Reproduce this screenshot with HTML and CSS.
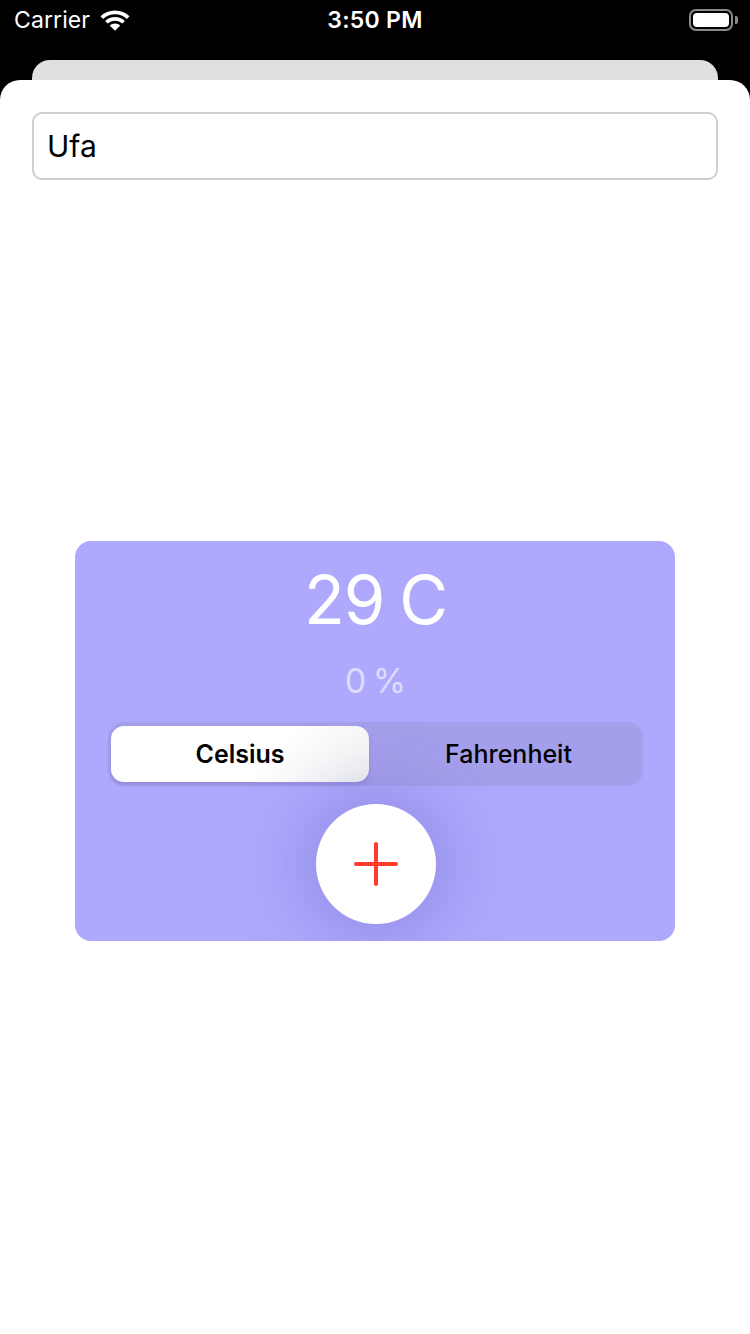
FILE: index.html
```html
<!DOCTYPE html>
<html>
<head>
<meta charset="utf-8">
<link rel="stylesheet" href="styles.css">
</head>
<body>
<div class="status">
  <div class="status-left">
    <span class="carrier">Carrier</span>
    <svg class="wifi" width="32" height="24" viewBox="0 0 32 24">
      <path d="M16 2.5c5.6 0 10.7 2.2 14.5 5.8l-2.6 2.6C24.8 8 20.6 6.2 16 6.2S7.2 8 4.1 10.9L1.5 8.3C5.3 4.7 10.4 2.5 16 2.5z" fill="#fff"/>
      <path d="M16 9c3.8 0 7.3 1.5 9.9 3.9l-2.6 2.6C21.4 13.8 18.8 12.7 16 12.7s-5.4 1.1-7.3 2.8l-2.6-2.6C8.7 10.5 12.2 9 16 9z" fill="#fff"/>
      <path d="M16 15.5c2 0 3.9.8 5.3 2L16 22.8l-5.3-5.3c1.4-1.2 3.3-2 5.3-2z" fill="#fff"/>
    </svg>
  </div>
  <div class="time">3:50 PM</div>
  <div class="status-right">
    <div class="battery"><div class="battery-fill"></div></div>
    <div class="battery-nub"></div>
  </div>
</div>
<div class="back-card"></div>
<div class="sheet">
  <div class="input">Ufa</div>
  <div class="card">
    <div class="temp">29 C</div>
    <div class="humidity">0 %</div>
    <div class="segmented">
      <div class="seg seg-active">Celsius</div>
      <div class="seg">Fahrenheit</div>
    </div>
    <div class="btn-wrap">
      <div class="add-btn">
        <svg width="44" height="44" viewBox="0 0 44 44">
          <path d="M22 2v40M2 22h40" stroke="#ff3b30" stroke-width="4" stroke-linecap="round"/>
        </svg>
      </div>
    </div>
  </div>
</div>
</body>
</html>
```

FILE: styles.css
```css
* { box-sizing: border-box; }
html, body { margin: 0; padding: 0; }
body {
  background: #000;
  font-family: Inter, "Noto Sans", "Liberation Sans", sans-serif;
  width: 750px;
  height: 1334px;
  overflow: hidden;
}
.status {
  height: 40px;
  display: flex;
  align-items: center;
  justify-content: space-between;
  padding: 0 12px 0 14px;
  color: #fff;
  position: relative;
}
.status-left { display: flex; align-items: center; gap: 9px; }
.carrier { font-size: 23px; letter-spacing: 0.1px; }
.wifi { margin-top: -1px; }
.time {
  position: absolute;
  left: 0; right: 0;
  text-align: center;
  font-size: 23px;
  font-weight: 600;
  letter-spacing: 0.3px;
  pointer-events: none;
}
.status-right { display: flex; align-items: center; gap: 2px; }
.battery {
  width: 44px; height: 22px;
  border: 2px solid #8a8a8a;
  border-radius: 7px;
  padding: 2px;
}
.battery-fill { width: 100%; height: 100%; background: #fff; border-radius: 4px; }
.battery-nub { width: 3px; height: 8px; background: #8a8a8a; border-radius: 0 2px 2px 0; }
.back-card {
  margin: 20px 32px 0;
  height: 24px;
  background: #e0e0e0;
  border-radius: 18px 18px 0 0;
}
.sheet {
  margin-top: -4px;
  background: #fff;
  border-radius: 20px 20px 0 0;
  height: 1254px;
  padding: 32px 32px 0;
}
.input {
  height: 68px;
  border: 2px solid #cfcfcf;
  border-radius: 10px;
  padding: 0 13px;
  display: flex;
  align-items: center;
  font-size: 30px;
  color: #000;
}
.card {
  margin: 361px 43px 0;
  width: 600px;
  background: #aea9fc;
  border-radius: 16px;
  padding: 19px 32px 17px 33px;
  display: flex;
  flex-direction: column;
  align-items: stretch;
  overflow: hidden;
}
.temp {
  text-align: center;
  color: #fff;
  font-size: 67px;
  line-height: 80px;
  font-weight: 400;
  letter-spacing: -1px;
  word-spacing: -3px;
}
.humidity {
  margin-top: 21px;
  text-align: center;
  color: rgba(255,255,255,0.6);
  font-size: 34px;
  line-height: 40px;
  word-spacing: -3px;
}
.segmented {
  margin-top: 21px;
  height: 64px;
  background: #a49fea;
  border-radius: 16px;
  padding: 4px 3px;
  display: flex;
  gap: 8px;
}
.seg {
  flex: 1;
  display: flex;
  align-items: center;
  justify-content: center;
  font-size: 25px;
  font-weight: 500;
  color: #000;
}
.seg-active {
  flex: 0 0 258px;
  background: linear-gradient(135deg, #ffffff 60%, #f2f2f2);
  border-radius: 13px;
  font-weight: 600;
  box-shadow: 0 3px 4px rgba(60,50,140,0.15);
}
.btn-wrap {
  margin-top: 18px;
  display: flex;
  justify-content: center;
}
.add-btn {
  width: 120px; height: 120px;
  border-radius: 50%;
  background: #fff;
  display: flex;
  align-items: center;
  justify-content: center;
  box-shadow: 0 0 70px 10px rgba(90,80,190,0.35);
}
```
